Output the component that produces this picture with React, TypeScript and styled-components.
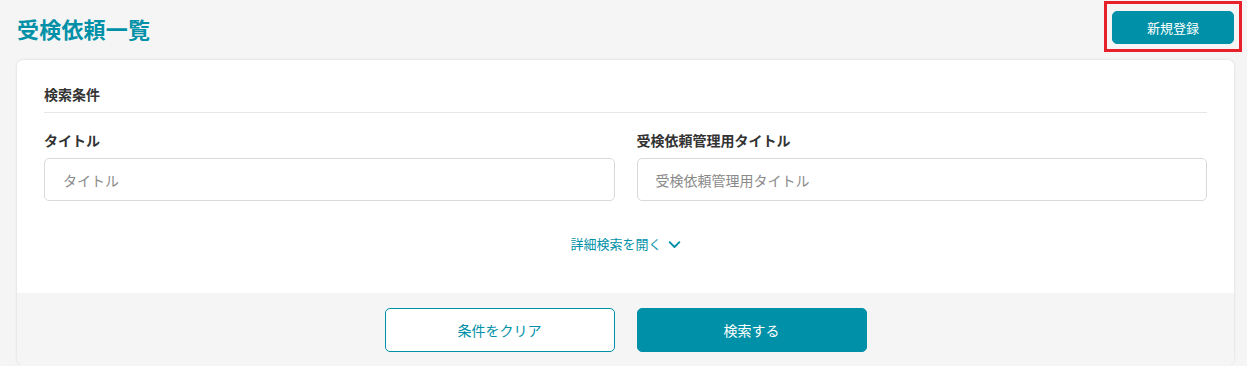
import React from 'react';
import styled, { createGlobalStyle } from 'styled-components';

const TEAL = '#0091a8';

const GlobalStyle = createGlobalStyle`
    body {
        margin: 0;
        background: #f5f5f5;
        font-family: 'Noto Sans CJK JP', 'Noto Sans', sans-serif;
        color: #333;
    }
`;

const Page = styled.div`
    padding: 11px 13px 0 17px;
`;

const Header = styled.div`
    display: flex;
    align-items: center;
    justify-content: space-between;
    height: 33px;
    margin-bottom: 16px;
`;

const PageTitle = styled.h1`
    margin: 0;
    font-size: 22px;
    font-weight: 700;
    color: ${TEAL};
    letter-spacing: 0.2px;
`;

const Highlight = styled.div`
    position: relative;
    &::after {
        content: '';
        position: absolute;
        left: -8px;
        right: -8px;
        top: -10px;
        bottom: -8px;
        border: 3px solid #e8202a;
        pointer-events: none;
    }
`;

const Button = styled.button<{ $outline?: boolean; $small?: boolean }>`
    display: flex;
    align-items: center;
    justify-content: center;
    box-sizing: border-box;
    width: ${(p) => (p.$small ? '122px' : '230px')};
    height: ${(p) => (p.$small ? '33px' : '44px')};
    border-radius: 5px;
    border: 1px solid ${TEAL};
    background: ${(p) => (p.$outline ? '#fff' : TEAL)};
    color: ${(p) => (p.$outline ? TEAL : '#fff')};
    font-family: inherit;
    font-size: ${(p) => (p.$small ? '13px' : '14px')};
    cursor: pointer;
`;

const Card = styled.div`
    background: #fff;
    border-radius: 6px;
    box-shadow: 0 0 3px rgba(0, 0, 0, 0.12);
    overflow: hidden;
`;

const CardBody = styled.div`
    padding: 24px 27px 40px;
`;

const SectionTitle = styled.div`
    font-size: 14px;
    font-weight: 700;
    line-height: 20px;
    padding-bottom: 8px;
    border-bottom: 1px solid #e6e6e6;
`;

const FieldGrid = styled.div`
    display: grid;
    grid-template-columns: 1fr 1fr;
    column-gap: 22px;
    margin-top: 18px;
`;

const Field = styled.label`
    display: flex;
    flex-direction: column;
    gap: 8px;
`;

const FieldLabel = styled.span`
    font-size: 14px;
    font-weight: 700;
    line-height: 19px;
`;

const Input = styled.input`
    box-sizing: border-box;
    height: 43px;
    border: 1px solid #d9d9d9;
    border-radius: 5px;
    padding: 0 18px;
    font-family: inherit;
    font-size: 14px;
    color: #333;
    outline: none;
    &::placeholder {
        color: #8a8a8a;
    }
`;

const ToggleRow = styled.div`
    display: flex;
    justify-content: center;
    margin-top: 34px;
`;

const ToggleLink = styled.a`
    display: flex;
    align-items: center;
    gap: 6px;
    font-size: 13px;
    line-height: 18px;
    color: ${TEAL};
    cursor: pointer;
`;

const Footer = styled.div`
    display: flex;
    justify-content: center;
    gap: 22px;
    background: #f5f5f5;
    padding: 15px 0 13px;
`;

const Chevron = () => (
    <svg width="13" height="13" viewBox="0 0 12 12" fill="none">
        <path d="M1.5 3.8 6 8.3l4.5-4.5" stroke={TEAL} strokeWidth="1.7" strokeLinecap="round" strokeLinejoin="round" />
    </svg>
);

const App = () => {
    return (
        <>
            <GlobalStyle />
            <Page>
                <Header>
                    <PageTitle>受検依頼一覧</PageTitle>
                    <Highlight>
                        <Button $small>新規登録</Button>
                    </Highlight>
                </Header>
                <Card>
                    <CardBody>
                        <SectionTitle>検索条件</SectionTitle>
                        <FieldGrid>
                            <Field>
                                <FieldLabel>タイトル</FieldLabel>
                                <Input placeholder="タイトル" />
                            </Field>
                            <Field>
                                <FieldLabel>受検依頼管理用タイトル</FieldLabel>
                                <Input placeholder="受検依頼管理用タイトル" />
                            </Field>
                        </FieldGrid>
                        <ToggleRow>
                            <ToggleLink>
                                詳細検索を開く
                                <Chevron />
                            </ToggleLink>
                        </ToggleRow>
                    </CardBody>
                    <Footer>
                        <Button $outline>条件をクリア</Button>
                        <Button>検索する</Button>
                    </Footer>
                </Card>
            </Page>
        </>
    );
};

export default App;
